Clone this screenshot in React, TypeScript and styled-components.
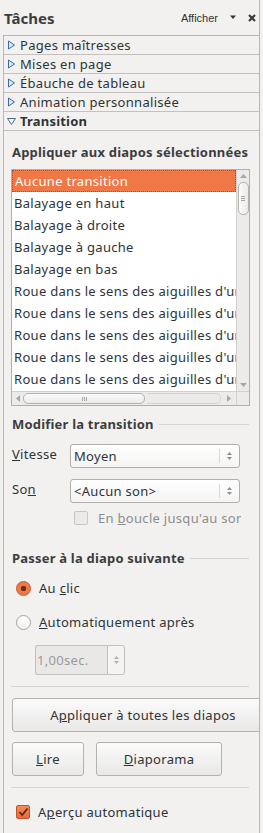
import React from "react";
import styled, {createGlobalStyle} from "styled-components";

const GlobalStyle = createGlobalStyle`
  html, body {
    margin: 0;
    padding: 0;
    background: #f2f1f0;
  }
  body {
    font-family: "Noto Sans", "Open Sans", sans-serif;
    font-size: 13px;
    letter-spacing: 0.3px;
    color: #2e3436;
  }
`;

const decks = ["Pages maîtresses", "Mises en page", "Ébauche de tableau", "Animation personnalisée"];

const transitions = [
  "Aucune transition",
  "Balayage en haut",
  "Balayage à droite",
  "Balayage à gauche",
  "Balayage en bas",
  "Roue dans le sens des aiguilles d'une montre, 1 rayon",
  "Roue dans le sens des aiguilles d'une montre, 2 rayons",
  "Roue dans le sens des aiguilles d'une montre, 3 rayons",
  "Roue dans le sens des aiguilles d'une montre, 4 rayons",
  "Roue dans le sens des aiguilles d'une montre, 8 rayons",
];

const DeckArrow: React.FC<{open?: boolean}> = ({open}) => (
  <svg width="9" height="10" viewBox="0 0 9 10">
    {open ? (
      <polygon points="0.5,2.5 8.5,2.5 4.5,8.5" fill="#eef2f8" stroke="#4c6a94" strokeWidth="1" />
    ) : (
      <polygon points="1.5,1 7.5,5 1.5,9" fill="#dfe8f5" stroke="#3b6aa8" strokeWidth="1" />
    )}
  </svg>
);

const SpinArrows: React.FC<{dim?: boolean}> = ({dim}) => (
  <svg width="7" height="12" viewBox="0 0 7 12">
    <polygon points="1,5 6,5 3.5,2" fill={dim ? "#b0b0ae" : "#8d8f8c"} />
    <polygon points="1,7 6,7 3.5,10" fill={dim ? "#b0b0ae" : "#8d8f8c"} />
  </svg>
);

const Mn: React.FC<{children: React.ReactNode}> = ({children}) => <u>{children}</u>;

export default function App() {
  return (
    <Page>
      <GlobalStyle />
      <TitleBar>
        <Title>Tâches</Title>
        <TitleTools>
          <ShowMenu>Afficher</ShowMenu>
          <svg width="6" height="5" viewBox="0 0 6 5">
            <polygon points="0,0.5 6,0.5 3,4" fill="#2e3436" />
          </svg>
          <svg width="8" height="8" viewBox="0 0 8 8">
            <path d="M1 1 L7 7 M7 1 L1 7" stroke="#3a3a3a" strokeWidth="2.2" />
          </svg>
        </TitleTools>
      </TitleBar>

      <Panel>
        {decks.map((d) => (
          <DeckRow key={d}>
            <DeckArrow />
            <span>{d}</span>
          </DeckRow>
        ))}
        <DeckRow $active>
          <DeckArrow open />
          <span>Transition</span>
        </DeckRow>

        <Content>
          <Heading $mt={12}>Appliquer aux diapos sélectionnées</Heading>

          <ListBox>
            <ListItems>
              {transitions.map((t, i) => (
                <ListItem key={i} $selected={i === 0}>
                  {t}
                </ListItem>
              ))}
            </ListItems>
            <VScroll>
              <svg width="9" height="6" viewBox="0 0 9 6">
                <polygon points="1,5 8,5 4.5,1" fill="#a7a8a5" />
              </svg>
              <VThumb>
                <Grip $vertical>
                  <i />
                  <i />
                  <i />
                </Grip>
              </VThumb>
              <VTrackFill />
              <svg width="9" height="6" viewBox="0 0 9 6">
                <polygon points="1,1 8,1 4.5,5" fill="#a7a8a5" />
              </svg>
            </VScroll>
            <HScroll>
              <svg width="6" height="9" viewBox="0 0 6 9">
                <polygon points="5,1 5,8 1,4.5" fill="#a7a8a5" />
              </svg>
              <HThumb>
                <Grip>
                  <i />
                  <i />
                  <i />
                </Grip>
              </HThumb>
              <HTrackFill />
              <svg width="6" height="9" viewBox="0 0 6 9">
                <polygon points="1,1 1,8 5,4.5" fill="#a7a8a5" />
              </svg>
            </HScroll>
            <Corner />
          </ListBox>

          <SectionHead $mt={9}>
            <Heading>Modifier la transition</Heading>
            <Rule />
          </SectionHead>

          <FieldRow $mt={11}>
            <FieldLabel>
              <Mn>V</Mn>itesse
            </FieldLabel>
            <Combo>
              <ComboText>Moyen</ComboText>
              <ComboButton>
                <SpinArrows />
              </ComboButton>
            </Combo>
          </FieldRow>

          <FieldRow $mt={11}>
            <FieldLabel>
              So<Mn>n</Mn>
            </FieldLabel>
            <Combo>
              <ComboText>&lt;Aucun son&gt;</ComboText>
              <ComboButton>
                <SpinArrows />
              </ComboButton>
            </Combo>
          </FieldRow>

          <LoopRow>
            <CheckBox $disabled />
            <DisabledText>
              En <Mn>b</Mn>oucle jusqu'au son suivant
            </DisabledText>
          </LoopRow>

          <SectionHead $mt={23}>
            <Heading>Passer à la diapo suivante</Heading>
            <Rule />
          </SectionHead>

          <OptionRow $mt={12}>
            <Radio $checked />
            <span>
              Au <Mn>c</Mn>lic
            </span>
          </OptionRow>
          <OptionRow $mt={16}>
            <Radio />
            <span>
              <Mn>A</Mn>utomatiquement après
            </span>
          </OptionRow>

          <SpinBox>
            <SpinText>1,00sec.</SpinText>
            <SpinButtons>
              <SpinArrows dim />
            </SpinButtons>
          </SpinBox>

          <Separator $mt={11} />

          <WideButton>
            A<Mn>p</Mn>pliquer à toutes les diapos
          </WideButton>

          <ButtonRow>
            <PushButton $w={72}>
              <Mn>L</Mn>ire
            </PushButton>
            <PushButton $w={126}>
              <Mn>D</Mn>iaporama
            </PushButton>
          </ButtonRow>

          <Separator $mt={11} />

          <OptionRow $mt={15}>
            <CheckBox $checked>
              <svg width="11" height="10" viewBox="0 0 11 10">
                <path d="M1.5 5 L4.2 8 L9.5 1.5" fill="none" stroke="#5a2a14" strokeWidth="1.8" />
              </svg>
            </CheckBox>
            <span>
              A<Mn>p</Mn>erçu automatique
            </span>
          </OptionRow>
        </Content>
      </Panel>
    </Page>
  );
}

const Page = styled.div`
  width: 263px;
  height: 833px;
  overflow: hidden;
  display: flex;
  flex-direction: column;
`;

const TitleBar = styled.div`
  display: flex;
  align-items: center;
  justify-content: space-between;
  height: 35px;
  padding: 0 3px 0 4px;
  border-right: 1px solid #b8b5b2;
  width: 260px;
  box-sizing: border-box;
`;

const Title = styled.div`
  font-size: 15px;
  font-weight: bold;
  letter-spacing: 0;
  color: #3b3e40;
  margin-top: 1px;
`;

const TitleTools = styled.div`
  display: flex;
  align-items: center;
  gap: 12px;
`;

const ShowMenu = styled.span`
  font-family: "Liberation Sans", sans-serif;
  font-size: 11px;
  letter-spacing: 0;
  color: #2e3436;
`;

const Panel = styled.div`
  margin-left: 3px;
  width: 257px;
  flex: 1;
  box-sizing: border-box;
  border: 1px solid #b8b5b2;
  border-bottom: none;
  overflow: hidden;
  display: flex;
  flex-direction: column;
`;

const DeckRow = styled.div<{$active?: boolean}>`
  display: flex;
  align-items: center;
  gap: 4px;
  height: 18px;
  padding-left: 3px;
  border-bottom: 1px solid #c4c1be;
  font-weight: ${({$active}) => ($active ? "bold" : "normal")};
  letter-spacing: ${({$active}) => ($active ? "0.2px" : "0.3px")};
  color: #2e3436;
  white-space: nowrap;
`;

const Content = styled.div`
  display: flex;
  flex-direction: column;
  padding: 0 8px 0 8px;
`;

const Heading = styled.div<{$mt?: number}>`
  margin-top: ${({$mt}) => $mt || 0}px;
  line-height: 18px;
  font-weight: bold;
  letter-spacing: 0.2px;
  color: #3b3e40;
  white-space: nowrap;
`;

const SectionHead = styled.div<{$mt: number}>`
  display: flex;
  align-items: center;
  gap: 5px;
  margin-top: ${({$mt}) => $mt}px;
  margin-right: 2px;
`;

const Rule = styled.div`
  flex: 1;
  height: 1px;
  background: #d6d3d0;
`;

const ListBox = styled.div`
  margin: 8px 0 0 -1px;
  width: 239px;
  height: 237px;
  box-sizing: border-box;
  border: 1px solid #b1aeab;
  background: #fff;
  display: grid;
  grid-template-columns: 1fr 13px;
  grid-template-rows: 221px 1fr;
`;

const ListItems = styled.div`
  overflow: hidden;
`;

const ListItem = styled.div<{$selected?: boolean}>`
  height: 22px;
  padding-left: 2px;
  white-space: nowrap;
  overflow: hidden;
  box-sizing: border-box;
  color: ${({$selected}) => ($selected ? "#fff" : "#2e3436")};
  background: ${({$selected}) => ($selected ? "#f07746" : "transparent")};
  border: ${({$selected}) => ($selected ? "1px dotted #3d6fa8" : "none")};
  line-height: ${({$selected}) => ($selected ? "20px" : "22px")};
`;

const VScroll = styled.div`
  display: flex;
  flex-direction: column;
  align-items: center;
  padding-top: 3px;
  padding-bottom: 3px;
  background: #ecebea;
  border-left: 1px solid #d3d0cd;
  gap: 3px;
`;

const VThumb = styled.div`
  width: 9px;
  height: 31px;
  border: 1px solid #b4b2af;
  border-radius: 5px;
  background: linear-gradient(to right, #fbfbfb, #ebeaea);
  display: flex;
  align-items: center;
  justify-content: center;
`;

const VTrackFill = styled.div`
  flex: 1;
`;

const HScroll = styled.div`
  display: flex;
  align-items: center;
  padding: 0 4px 0 3px;
  gap: 2px;
  background: #ecebea;
  border-top: 1px solid #d3d0cd;
`;

const HThumb = styled.div`
  width: 120px;
  height: 9px;
  border: 1px solid #b4b2af;
  border-radius: 5px;
  background: linear-gradient(#fbfbfb, #ebeaea);
  display: flex;
  align-items: center;
  justify-content: center;
`;

const HTrackFill = styled.div`
  flex: 1;
  height: 9px;
  border: 1px solid #d6d4d1;
  border-left: none;
  border-radius: 0 5px 5px 0;
  margin-right: 3px;
`;

const Grip = styled.div<{$vertical?: boolean}>`
  display: flex;
  flex-direction: ${({$vertical}) => ($vertical ? "column" : "row")};
  gap: 1px;

  i {
    display: block;
    background: #a5a6a3;
    width: ${({$vertical}) => ($vertical ? "4px" : "1px")};
    height: ${({$vertical}) => ($vertical ? "1px" : "4px")};
  }
`;

const Corner = styled.div`
  background: #ecebea;
  border-top: 1px solid #d3d0cd;
  border-left: 1px solid #d3d0cd;
`;

const FieldRow = styled.div<{$mt: number}>`
  display: flex;
  align-items: center;
  margin-top: ${({$mt}) => $mt}px;
`;

const FieldLabel = styled.div`
  width: 58px;
  margin-top: -4px;
  color: #2e3436;
`;

const Combo = styled.div`
  display: flex;
  width: 170px;
  height: 24px;
  box-sizing: border-box;
  border: 1px solid #b1aeab;
  border-radius: 3px;
  background: linear-gradient(#ffffff, #f4f4f3);
`;

const ComboText = styled.div`
  flex: 1;
  padding-left: 3px;
  line-height: 22px;
  white-space: nowrap;
`;

const ComboButton = styled.div`
  width: 19px;
  display: flex;
  align-items: center;
  justify-content: center;
  border-left: 1px solid #dcdad7;
  margin: 4px 0;
`;

const LoopRow = styled.div`
  display: flex;
  align-items: center;
  gap: 10px;
  margin: 7px 0 0 62px;
  width: 167px;
  overflow: hidden;
  height: 16px;
  white-space: nowrap;
`;

const DisabledText = styled.span`
  color: #8b8e8f;
`;

const CheckBox = styled.div<{$checked?: boolean; $disabled?: boolean}>`
  width: 14px;
  height: 14px;
  flex: none;
  box-sizing: border-box;
  border-radius: 2px;
  border: 1px solid ${({$checked, $disabled}) => ($checked ? "#c0542b" : $disabled ? "#c9c7c4" : "#a5a29f")};
  background: ${({$checked, $disabled}) =>
    $checked ? "linear-gradient(#f58a5a, #ea6a3a)" : $disabled ? "#ebeae8" : "#fff"};
  display: flex;
  align-items: center;
  justify-content: center;
`;

const OptionRow = styled.div<{$mt: number}>`
  display: flex;
  align-items: center;
  gap: 8px;
  height: 18px;
  margin-top: ${({$mt}) => $mt}px;
  padding-left: 4px;
  white-space: nowrap;
`;

const Radio = styled.div<{$checked?: boolean}>`
  width: 15px;
  height: 15px;
  flex: none;
  box-sizing: border-box;
  border-radius: 50%;
  border: 1px solid ${({$checked}) => ($checked ? "#c8582e" : "#a5a29f")};
  background: ${({$checked}) =>
    $checked
      ? "radial-gradient(circle, #6b2f18 0 2.5px, #f07746 3px)"
      : "linear-gradient(#ffffff, #f1f1f0)"};
`;

const SpinBox = styled.div`
  display: flex;
  margin: 14px 0 0 23px;
  width: 90px;
  height: 30px;
`;

const SpinText = styled.div`
  width: 72px;
  box-sizing: border-box;
  border: 1px solid #c3c1be;
  border-right: none;
  border-radius: 3px 0 0 3px;
  background: #e9e8e6;
  color: #9a9c9c;
  line-height: 28px;
  padding-left: 1px;
`;

const SpinButtons = styled.div`
  flex: 1;
  border: 1px solid #c3c1be;
  border-radius: 0 3px 3px 0;
  background: #f4f3f2;
  display: flex;
  align-items: center;
  justify-content: center;
`;

const Separator = styled.div<{$mt: number}>`
  height: 1px;
  margin: ${({$mt}) => $mt}px 2px 0 -1px;
  background: #d6d3d0;
`;

const ButtonBase = styled.div`
  box-sizing: border-box;
  height: 34px;
  border: 1px solid #b4b2af;
  border-radius: 3px;
  background: linear-gradient(#fbfbfb, #e9e8e7);
  display: flex;
  align-items: center;
  justify-content: center;
  white-space: nowrap;
  color: #2e3436;
`;

const WideButton = styled(ButtonBase)`
  margin-top: 11px;
  width: 262px;
  flex: none;
`;

const ButtonRow = styled.div`
  display: flex;
  gap: 12px;
  margin-top: 10px;
`;

const PushButton = styled(ButtonBase)<{$w: number}>`
  width: ${({$w}) => $w}px;
`;
